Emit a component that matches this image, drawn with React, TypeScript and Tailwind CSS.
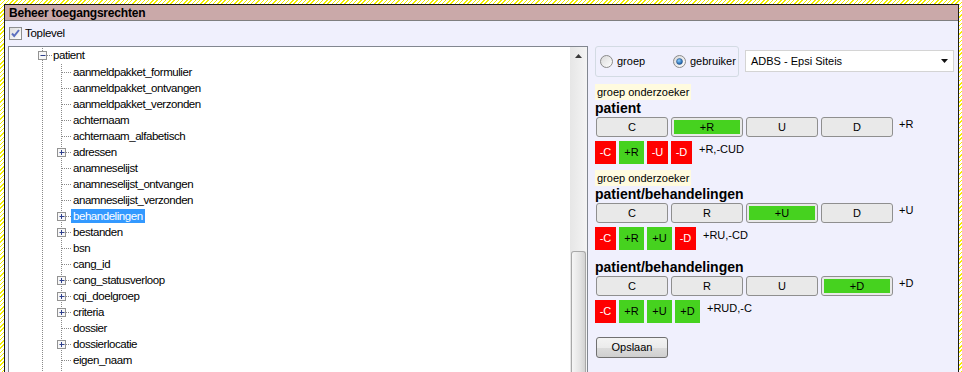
import React from "react";

type TreeNode = { label: string; plus?: boolean; selected?: boolean };

const nodes: TreeNode[] = [
  { label: "aanmeldpakket_formulier" },
  { label: "aanmeldpakket_ontvangen" },
  { label: "aanmeldpakket_verzonden" },
  { label: "achternaam" },
  { label: "achternaam_alfabetisch" },
  { label: "adressen", plus: true },
  { label: "anamneselijst" },
  { label: "anamneselijst_ontvangen" },
  { label: "anamneselijst_verzonden" },
  { label: "behandelingen", plus: true, selected: true },
  { label: "bestanden", plus: true },
  { label: "bsn" },
  { label: "cang_id" },
  { label: "cang_statusverloop", plus: true },
  { label: "cqi_doelgroep", plus: true },
  { label: "criteria", plus: true },
  { label: "dossier" },
  { label: "dossierlocatie", plus: true },
  { label: "eigen_naam" },
  { label: "functie" },
];

const DOT = "#8a8a8a";

const ExpandBox = ({ x, y, plus }: { x: number; y: number; plus: boolean }) => (
  <g>
    <rect x={x} y={y} width="8" height="8" fill="#f7f7f7" stroke="#929292" />
    <line x1={x + 2} y1={y + 4} x2={x + 7} y2={y + 4} stroke="#2e3f8c" />
    {plus && <line x1={x + 4} y1={y + 1.5} x2={x + 4} y2={y + 6.5} stroke="#2e3f8c" />}
  </g>
);

const PatientRow = () => (
  <div className="flex h-4 items-center">
    <svg width="44" height="16" className="shrink-0">
      <line x1="33.5" y1="0" x2="33.5" y2="16" stroke={DOT} strokeDasharray="1 1" />
      <line x1="38" y1="7.5" x2="44" y2="7.5" stroke={DOT} strokeDasharray="1 1" />
      <ExpandBox x={29.5} y={3.5} plus={false} />
    </svg>
    <span>patient</span>
  </div>
);

const ChildRow = ({ node }: { node: TreeNode }) => (
  <div className="flex h-4 items-center">
    <svg width="62" height="16" className="shrink-0">
      <line x1="33.5" y1="0" x2="33.5" y2="16" stroke={DOT} strokeDasharray="1 1" />
      <line x1="52.5" y1="0" x2="52.5" y2="16" stroke={DOT} strokeDasharray="1 1" />
      <line x1="53" y1="8.5" x2="62" y2="8.5" stroke={DOT} strokeDasharray="1 1" />
      {node.plus && <ExpandBox x={48.5} y={4.5} plus />}
    </svg>
    <span
      className={
        node.selected
          ? "bg-[#3399ff] px-[2px] leading-[14px] text-white"
          : "px-[2px] leading-[14px]"
      }
    >
      {node.label}
    </span>
  </div>
);

const Radio = ({ checked }: { checked?: boolean }) => (
  <svg width="13" height="13" className="shrink-0">
    <defs>
      <linearGradient id="rg" x1="0" y1="0" x2="1" y2="1">
        <stop offset="0" stopColor="#d8d8d8" />
        <stop offset="1" stopColor="#ffffff" />
      </linearGradient>
      <radialGradient id="rb" cx="0.4" cy="0.35" r="0.6">
        <stop offset="0" stopColor="#8fd0ff" />
        <stop offset="1" stopColor="#1a5fa8" />
      </radialGradient>
    </defs>
    <circle cx="6.5" cy="6.5" r="6" fill="url(#rg)" stroke="#8a8a8a" />
    {checked && <circle cx="6.5" cy="6.5" r="3" fill="url(#rb)" stroke="#2a4f80" strokeWidth="0.5" />}
  </svg>
);

type Btn = { l: string; on?: boolean };
type Box = { l: string; plus: boolean };

const CrudButton = ({ b }: { b: Btn }) => (
  <div className="flex h-5 w-[72px] items-center justify-center rounded-[3px] border border-[#8f8f8f] bg-[#e9e9e9] p-[2px]">
    {b.on ? (
      <div className="flex h-full w-full items-center justify-center bg-[#46d21f]">{b.l}</div>
    ) : (
      b.l
    )}
  </div>
);

const Section = ({
  label,
  title,
  buttons,
  side,
  boxes,
  summary,
  first,
}: {
  label?: boolean;
  title: string;
  buttons: Btn[];
  side: string;
  boxes: Box[];
  summary: string;
  first?: boolean;
}) => (
  <div className={first ? "flex flex-col" : "mt-[6px] flex flex-col"}>
    {label && (
      <div className="self-start bg-[#fffbdf] px-[2px] leading-4">groep onderzoeker</div>
    )}
    <div className={label ? "text-[14px] font-bold leading-4 text-black" : "mt-[3px] text-[14px] font-bold leading-4 text-black"}>
      {title}
    </div>
    <div className="mt-[1px] flex items-start gap-[3px] pl-[1px]">
      {buttons.map((b) => (
        <CrudButton key={b.l} b={b} />
      ))}
      <span className="ml-[3px] leading-[14px]">{side}</span>
    </div>
    <div className="mt-[4px] flex items-start gap-[3px]">
      {boxes.map((x) => (
        <div
          key={x.l}
          className={
            x.plus
              ? "flex h-[23px] w-[25px] items-center justify-center bg-[#46d21f] text-black"
              : "flex h-[23px] w-[21px] items-center justify-center bg-[#ff0000] text-white"
          }
        >
          {x.l}
        </div>
      ))}
      <span className="ml-[4px] mt-[1px] leading-[14px]">{summary}</span>
    </div>
  </div>
);

export default function App() {
  return (
    <div className="h-[372px] w-[962px] overflow-hidden bg-[repeating-linear-gradient(135deg,#f4f000_0px,#f4f000_1px,#ffffff_1px,#ffffff_3px)] pl-[4px] pr-[3px] pt-[4px] font-['Liberation_Sans',Arial,sans-serif] text-[11px] text-black">
      <div className="flex h-[390px] flex-col border border-b-0 border-[#1a1a1a] bg-[#f0f0fd]">
        <div className="flex h-4 items-center border-b border-[#7f7f7f] bg-[#caa9a9] pl-[4px] text-[12px] font-bold tracking-[-0.2px]">
          Beheer toegangsrechten
        </div>
        <div className="flex h-[25px] items-center gap-[3px] pl-[4px]">
          <svg width="13" height="13" className="shrink-0">
            <defs>
              <linearGradient id="cb" x1="0" y1="0" x2="1" y2="1">
                <stop offset="0" stopColor="#dcdcdc" />
                <stop offset="1" stopColor="#ffffff" />
              </linearGradient>
            </defs>
            <rect x="0.5" y="0.5" width="12" height="12" fill="url(#cb)" stroke="#8e8f8f" />
            <path d="M3 6.5 L5.2 9 L10 3" fill="none" stroke="#5b6fbf" strokeWidth="2" />
          </svg>
          <span className="text-[11.5px] tracking-[-0.3px]">Toplevel</span>
        </div>
        <div className="flex flex-1 items-stretch">
          <div className="ml-[3px] flex w-[580px] border border-b-0 border-[#828790] bg-white">
            <div className="flex flex-1 flex-col pt-[1px] text-[11.5px] tracking-[-0.45px]">
              <PatientRow />
              {nodes.map((n) => (
                <ChildRow key={n.label} node={n} />
              ))}
            </div>
            <div className="flex w-[17px] flex-col bg-[linear-gradient(90deg,#e6e6e6,#f4f4f4)]">
              <div className="flex h-[17px] items-center justify-center">
                <svg width="7" height="4">
                  <polygon points="0,4 7,4 3.5,0" fill="#3a3a3a" />
                </svg>
              </div>
              <div className="h-[187px]" />
              <div className="mx-[1px] flex-1 rounded-t-[3px] border border-b-0 border-[#a8a8a8] bg-[linear-gradient(90deg,#f6f6f6,#e4e4e4_60%,#d2d2d2)]" />
            </div>
          </div>
          <div className="flex flex-1 flex-col pl-[7px] pr-[4px]">
            <div className="flex items-start gap-[6px]">
              <div className="flex h-[31px] w-[144px] items-center gap-[4px] rounded-[3px] border border-[#d3dbe3] pl-[4px]">
                <Radio />
                <span className="w-[52px]">groep</span>
                <Radio checked />
                <span>gebruiker</span>
              </div>
              <div className="mt-[4px] flex h-[22px] flex-1 items-center justify-between border border-[#d4d4d4] bg-white pl-[5px] pr-[5px]">
                <span>ADBS - Epsi Siteis</span>
                <svg width="7" height="4">
                  <polygon points="0,0 7,0 3.5,4" fill="#111" />
                </svg>
              </div>
            </div>
            <div className="mt-[7px]">
              <Section
                first
                label
                title="patient"
                buttons={[{ l: "C" }, { l: "+R", on: true }, { l: "U" }, { l: "D" }]}
                side="+R"
                boxes={[
                  { l: "-C", plus: false },
                  { l: "+R", plus: true },
                  { l: "-U", plus: false },
                  { l: "-D", plus: false },
                ]}
                summary="+R,-CUD"
              />
              <Section
                label
                title="patient/behandelingen"
                buttons={[{ l: "C" }, { l: "R" }, { l: "+U", on: true }, { l: "D" }]}
                side="+U"
                boxes={[
                  { l: "-C", plus: false },
                  { l: "+R", plus: true },
                  { l: "+U", plus: true },
                  { l: "-D", plus: false },
                ]}
                summary="+RU,-CD"
              />
              <Section
                title="patient/behandelingen"
                buttons={[{ l: "C" }, { l: "R" }, { l: "U" }, { l: "+D", on: true }]}
                side="+D"
                boxes={[
                  { l: "-C", plus: false },
                  { l: "+R", plus: true },
                  { l: "+U", plus: true },
                  { l: "+D", plus: true },
                ]}
                summary="+RUD,-C"
              />
            </div>
            <button className="ml-[1px] mt-[14px] flex h-[21px] w-[72px] items-center justify-center rounded-[3px] border border-[#707070] bg-[linear-gradient(180deg,#f3f3f3,#ebebeb_50%,#dcdcdc_51%,#cfcfcf)] text-[11px]">
              Opslaan
            </button>
          </div>
        </div>
      </div>
    </div>
  );
}
